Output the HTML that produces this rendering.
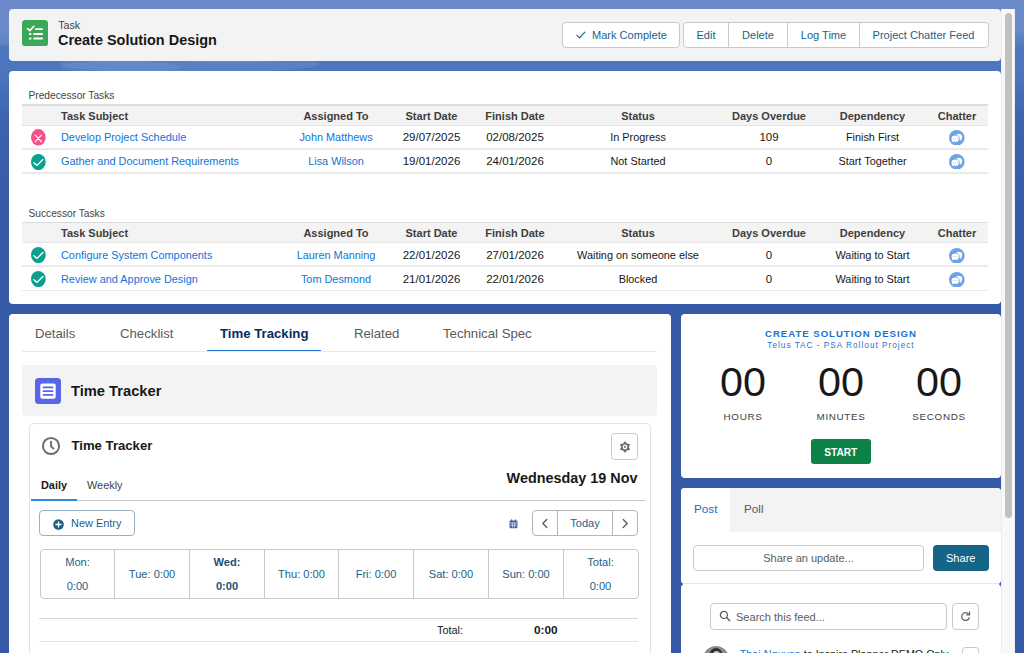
<!DOCTYPE html>
<html>
<head>
<meta charset="utf-8">
<title>Create Solution Design</title>
<style>
*{box-sizing:border-box;margin:0;padding:0}
html,body{width:1024px;height:653px;overflow:hidden}
body{font-family:"Liberation Sans",sans-serif;font-size:10.9px;color:#181818;position:relative;
 background:linear-gradient(180deg,#6b8aca 0px,#6a89c9 30px,#4e78be 48px,#4b75bc 75px,#3d62ae 125px,#385ba9 200px,#375aa8 653px)}
.abs{position:absolute}
.card{position:absolute;background:#fff;border-radius:4px}
.t{position:absolute;white-space:nowrap;line-height:16px;height:16px}
.c{text-align:center}
.b{font-weight:700}
.link{color:#0f74d8}
.btn{position:absolute;background:#fff;border:1px solid #c9c9c9;border-radius:4px;color:#1a6189;text-align:center;white-space:nowrap}
.hdr{position:absolute;left:22px;width:966px;height:22px;background:#f3f3f3;border-top:2px solid #dcdcdc;border-bottom:1px solid #e5e5e5}
.hl{position:absolute;left:22px;width:966px;height:1.500px;background:#eaeaea}
.th{font-weight:700;color:#3e3e3c}
.ic{position:absolute;width:15px;height:15px}
</style>
</head>
<body>

<!-- page wave highlight -->
<svg class="abs" style="left:0;top:0" width="1024" height="120" viewBox="0 0 1024 120">
 <path d="M0 0H1024V26C900 30 800 40 640 44C470 48 360 60 250 62C150 64 60 50 0 44Z" fill="#6b8aca" opacity=".6"/>
</svg>

<svg class="abs" style="left:0;top:40px" width="520" height="40" viewBox="0 0 520 40">
 <ellipse cx="190" cy="24" rx="130" ry="9" fill="#7f9fd6" opacity=".25"/>
 <ellipse cx="120" cy="27" rx="60" ry="6" fill="#8aa8dc" opacity=".2"/>
</svg>
<!-- scrollbar -->
<div class="abs" style="left:1001px;top:9px;width:14px;height:644px;background:#f8f8f8;border-left:1px solid #ececec;border-right:1px solid #ececec"></div>
<div class="abs" style="left:1005px;top:13px;width:7px;height:505px;background:#c1c1c1;border-radius:4px"></div>

<!-- HEADER -->
<div class="card" id="header" style="left:9px;top:9px;width:992px;height:52px;background:#f3f3f3"></div>
<!-- task icon -->
<svg class="abs" style="left:22px;top:20px" width="26.100" height="26.300" viewBox="0 0 26.1 26.3">
 <rect x="0" y="0" width="26.100" height="26.300" rx="3.600" fill="#3ba858"/>
 <path d="M5.600 8.700l2.200 2 4-4.300" fill="none" stroke="#fff" stroke-width="1.700" stroke-linecap="round" stroke-linejoin="round"/>
 <rect x="13.100" y="8.200" width="7.800" height="1.900" rx=".5" fill="#fff"/>
 <rect x="7" y="12.900" width="2.400" height="2.100" rx=".5" fill="#fff"/>
 <rect x="11.300" y="12.900" width="9.600" height="2.100" rx=".5" fill="#fff"/>
 <rect x="7" y="17.500" width="2.400" height="2.100" rx=".5" fill="#fff"/>
 <rect x="11.300" y="17.500" width="9.600" height="2.100" rx=".5" fill="#fff"/>
</svg>
<div class="t" style="left:58.200px;top:17px;font-size:10.7px;color:#444">Task</div>
<div class="t b" style="left:58px;top:30.600px;font-size:14.45px;line-height:18px;height:18px;color:#181818">Create Solution Design</div>

<div class="btn" style="left:562px;top:22px;width:118px;height:25.800px"></div>
<svg class="abs" style="left:575px;top:30px" width="12" height="10" viewBox="0 0 12 10"><path d="M2 5.400l2.600 2.500L9.800 2.200" fill="none" stroke="#1a6189" stroke-width="1.150" stroke-linecap="round" stroke-linejoin="round"/></svg>
<div class="t" style="left:592px;top:26.5px;font-size:11.06px;color:#1a6189">Mark Complete</div>

<div class="btn" style="left:683px;top:22px;width:306px;height:25.800px"></div>
<div class="abs" style="left:728px;top:22px;width:1px;height:25.800px;background:#c9c9c9"></div>
<div class="abs" style="left:787px;top:22px;width:1px;height:25.800px;background:#c9c9c9"></div>
<div class="abs" style="left:859px;top:22px;width:1px;height:25.800px;background:#c9c9c9"></div>
<div class="t c" style="left:683px;width:46px;top:26.5px;font-size:11.06px;color:#1a6189">Edit</div>
<div class="t c" style="left:728px;width:60px;top:26.5px;font-size:11.06px;color:#1a6189">Delete</div>
<div class="t c" style="left:787px;width:73px;top:26.5px;font-size:11.06px;color:#1a6189">Log Time</div>
<div class="t c" style="left:859px;width:129px;top:26.5px;font-size:11.06px;color:#1a6189">Project Chatter Feed</div>

<!-- CARD 1 : related tasks -->
<div class="card" id="card1" style="left:9px;top:71px;width:992px;height:232.700px"></div>
<svg width="0" height="0" style="position:absolute">
 <defs>
  <g id="i-x"><ellipse cx="7.350" cy="8.300" rx="7.350" ry="8.300" fill="#fb4f89"/><path d="M4.300 6.100l6.100 6.600M10.400 6.100l-6.100 6.600" stroke="#fff" stroke-width="1.200" stroke-linecap="round"/></g>
  <g id="i-ok"><ellipse cx="7.350" cy="8.100" rx="7.350" ry="8.100" fill="#0ca08e"/><path d="M2.900 8.700l3.100 2.700 5.900-5.800" fill="none" stroke="#fff" stroke-width="1.350" stroke-linecap="round" stroke-linejoin="round"/></g>
  <g id="i-ch"><circle cx="8" cy="8" r="8" fill="#6ea3e6"/>
   <ellipse cx="10.200" cy="7.150" rx="3.300" ry="3.200" fill="#fff"/><path d="M12 9.300l1.500 1.400-2.600-.3z" fill="#fff"/>
   <ellipse cx="6.400" cy="8.900" rx="4.650" ry="4.050" fill="#6ea3e6"/>
   <ellipse cx="6.400" cy="8.900" rx="3.800" ry="3.250" fill="#fff"/><path d="M3.400 10.400l-.6 2 2.400-.9z" fill="#fff"/>
   <circle cx="4.400" cy="8.900" r=".45" fill="#6ea3e6"/><circle cx="6.450" cy="8.900" r=".45" fill="#6ea3e6"/><circle cx="8.500" cy="8.900" r=".45" fill="#6ea3e6"/>
  </g>
 </defs>
</svg>

<!-- Predecessor -->
<div class="t" style="left:28.500px;top:87.500px;font-size:10.2px;color:#444">Predecessor Tasks</div>
<div class="hdr" style="top:104px"></div>
<div class="t th" style="left:61px;top:108px;font-size:11px">Task Subject</div>
<div class="t th c" style="left:286px;width:100px;top:108px;font-size:11px">Assigned To</div>
<div class="t th c" style="left:381.500px;width:100px;top:108px;font-size:11px">Start Date</div>
<div class="t th c" style="left:465px;width:100px;top:108px;font-size:11px">Finish Date</div>
<div class="t th c" style="left:588px;width:100px;top:108px;font-size:11px">Status</div>
<div class="t th c" style="left:719px;width:100px;top:108px;font-size:11px">Days Overdue</div>
<div class="t th c" style="left:822.500px;width:100px;top:108px;font-size:11px">Dependency</div>
<div class="t th c" style="left:907px;width:100px;top:108px;font-size:11px">Chatter</div>

<svg class="abs" style="left:31px;top:129.20px;width:14.700px;height:16.6px" viewBox="0 0 14.7 16.6"><use href="#i-x"/></svg>
<div class="t link" style="left:61px;top:129px">Develop Project Schedule</div>
<div class="t link c" style="left:236px;width:200px;top:129px">John Matthews</div>
<div class="t c" style="left:381.500px;width:100px;top:129px;font-size:11.5px">29/07/2025</div>
<div class="t c" style="left:465px;width:100px;top:129px;font-size:11.5px">02/08/2025</div>
<div class="t c" style="left:538px;width:200px;top:129px">In Progress</div>
<div class="t c" style="left:719px;width:100px;top:129px;font-size:11.5px">109</div>
<div class="t c" style="left:772.500px;width:200px;top:129px">Finish First</div>
<svg class="abs" style="left:949.200px;top:129.700px;width:15.600px;height:15.600px" viewBox="0 0 16 16"><use href="#i-ch"/></svg>
<div class="hl" style="top:148.300px"></div>

<svg class="abs" style="left:31px;top:153.80px;width:14.700px;height:16.2px" viewBox="0 0 14.7 16.2"><use href="#i-ok"/></svg>
<div class="t link" style="left:61px;top:153px">Gather and Document Requirements</div>
<div class="t link c" style="left:236px;width:200px;top:153px">Lisa Wilson</div>
<div class="t c" style="left:381.500px;width:100px;top:153px;font-size:11.5px">19/01/2026</div>
<div class="t c" style="left:465px;width:100px;top:153px;font-size:11.5px">24/01/2026</div>
<div class="t c" style="left:538px;width:200px;top:153px">Not Started</div>
<div class="t c" style="left:719px;width:100px;top:153px;font-size:11.5px">0</div>
<div class="t c" style="left:772.500px;width:200px;top:153px">Start Together</div>
<svg class="abs" style="left:949.200px;top:153.700px;width:15.600px;height:15.600px" viewBox="0 0 16 16"><use href="#i-ch"/></svg>
<div class="hl" style="top:172.200px"></div>

<!-- Successor -->
<div class="t" style="left:28.500px;top:205.500px;font-size:10.2px;color:#444">Successor Tasks</div>
<div class="hdr" style="top:222px;height:21px;border-top-width:1.500px"></div>
<div class="t th" style="left:61px;top:225.300px;font-size:11px">Task Subject</div>
<div class="t th c" style="left:286px;width:100px;top:225.300px;font-size:11px">Assigned To</div>
<div class="t th c" style="left:381.500px;width:100px;top:225.300px;font-size:11px">Start Date</div>
<div class="t th c" style="left:465px;width:100px;top:225.300px;font-size:11px">Finish Date</div>
<div class="t th c" style="left:588px;width:100px;top:225.300px;font-size:11px">Status</div>
<div class="t th c" style="left:719px;width:100px;top:225.300px;font-size:11px">Days Overdue</div>
<div class="t th c" style="left:822.500px;width:100px;top:225.300px;font-size:11px">Dependency</div>
<div class="t th c" style="left:907px;width:100px;top:225.300px;font-size:11px">Chatter</div>

<svg class="abs" style="left:31px;top:247.00px;width:14.700px;height:16.2px" viewBox="0 0 14.7 16.2"><use href="#i-ok"/></svg>
<div class="t link" style="left:61px;top:247px">Configure System Components</div>
<div class="t link c" style="left:236px;width:200px;top:247px">Lauren Manning</div>
<div class="t c" style="left:381.500px;width:100px;top:247px;font-size:11.5px">22/01/2026</div>
<div class="t c" style="left:465px;width:100px;top:247px;font-size:11.5px">27/01/2026</div>
<div class="t c" style="left:538px;width:200px;top:247px">Waiting on someone else</div>
<div class="t c" style="left:719px;width:100px;top:247px;font-size:11.5px">0</div>
<div class="t c" style="left:772.500px;width:200px;top:247px">Waiting to Start</div>
<svg class="abs" style="left:949.200px;top:247.5px;width:15.600px;height:15.600px" viewBox="0 0 16 16"><use href="#i-ch"/></svg>
<div class="hl" style="top:265.300px"></div>

<svg class="abs" style="left:31px;top:270.85px;width:14.700px;height:16.2px" viewBox="0 0 14.7 16.2"><use href="#i-ok"/></svg>
<div class="t link" style="left:61px;top:271px">Review and Approve Design</div>
<div class="t link c" style="left:236px;width:200px;top:271px">Tom Desmond</div>
<div class="t c" style="left:381.500px;width:100px;top:271px;font-size:11.5px">21/01/2026</div>
<div class="t c" style="left:465px;width:100px;top:271px;font-size:11.5px">22/01/2026</div>
<div class="t c" style="left:538px;width:200px;top:271px">Blocked</div>
<div class="t c" style="left:719px;width:100px;top:271px;font-size:11.5px">0</div>
<div class="t c" style="left:772.500px;width:200px;top:271px">Waiting to Start</div>
<svg class="abs" style="left:949.200px;top:271.5px;width:15.600px;height:15.600px" viewBox="0 0 16 16"><use href="#i-ch"/></svg>
<div class="hl" style="top:289.500px"></div>

<!-- CARD 2 : tabs -->
<div class="card" id="card2" style="left:9px;top:314.300px;width:661.500px;height:346px"></div>
<!-- tabs -->
<div class="abs" style="left:22px;top:351px;width:635px;height:1px;background:#e9e9e9"></div>
<div class="t" style="left:35px;top:325px;font-size:13.2px;line-height:18px;height:18px;color:#5a5a5a">Details</div>
<div class="t" style="left:120px;top:325px;font-size:13.2px;line-height:18px;height:18px;color:#5a5a5a">Checklist</div>
<div class="t b" style="left:220px;top:325px;font-size:13.2px;line-height:18px;height:18px;color:#032d60">Time Tracking</div>
<div class="t" style="left:354px;top:325px;font-size:13.2px;line-height:18px;height:18px;color:#5a5a5a">Related</div>
<div class="t" style="left:443px;top:325px;font-size:13.2px;line-height:18px;height:18px;color:#5a5a5a">Technical Spec</div>
<div class="abs" style="left:207px;top:349.700px;width:114px;height:1.800px;background:#2477d2"></div>

<!-- Time Tracker band -->
<div class="abs" style="left:22px;top:365px;width:635px;height:51px;background:#f3f3f3;border-radius:4px"></div>
<svg class="abs" style="left:35px;top:378px" width="26" height="26" viewBox="0 0 26 26">
 <rect width="26" height="26" rx="3.5" fill="#5867e8"/>
 <rect x="5.300" y="5.400" width="15.400" height="15.300" rx="2" fill="#fff"/>
 <rect x="7.700" y="8.400" width="10.600" height="1.800" rx=".5" fill="#5867e8"/>
 <rect x="7.700" y="12.200" width="10.600" height="1.800" rx=".5" fill="#5867e8"/>
 <rect x="7.700" y="16" width="10.600" height="1.800" rx=".5" fill="#5867e8"/>
</svg>
<div class="t b" style="left:71px;top:381.700px;font-size:14.7px;line-height:18px;height:18px">Time Tracker</div>

<!-- inner card -->
<div class="abs" style="left:29px;top:423px;width:622px;height:240px;border:1px solid #e2e2e2;border-radius:4px;background:#fff"></div>
<svg class="abs" style="left:41px;top:436px" width="20" height="20" viewBox="0 0 20 20">
 <circle cx="10" cy="10" r="8.100" fill="none" stroke="#6e6e6e" stroke-width="2"/>
 <path d="M10 5.600v4.600l2.500 2.400" fill="none" stroke="#6e6e6e" stroke-width="1.900" stroke-linecap="round" stroke-linejoin="round"/>
</svg>
<div class="t b" style="left:71.500px;top:437.300px;font-size:13.15px;line-height:18px;height:18px">Time Tracker</div>

<!-- gear button -->
<div class="btn" style="left:611px;top:433px;width:27px;height:26.600px;border-radius:3.500px"></div>
<svg class="abs" style="left:618.500px;top:440.700px" width="12" height="12" viewBox="0 0 12 12">
 <path d="M6.00 1.10L7.60 3.23L10.24 3.55L9.20 6.00L10.24 8.45L7.60 8.77L6.00 10.90L4.40 8.77L1.76 8.45L2.80 6.00L1.76 3.55L4.40 3.23Z" fill="#6a6a6a" stroke="#6a6a6a" stroke-width="1.300" stroke-linejoin="round"/>
 <circle cx="6" cy="6" r="2.450" fill="#fff"/>
 <circle cx="6" cy="6" r="1.150" fill="#8a8a8a"/>
</svg>

<div class="t b" style="right:386.500px;top:469px;font-size:14.4px;line-height:18px;height:18px">Wednesday 19 Nov</div>

<!-- daily/weekly -->
<div class="abs" style="left:31px;top:500px;width:615px;height:1px;background:#c9c9c9"></div>
<div class="abs" style="left:31px;top:499px;width:46px;height:2px;background:#2c8be0"></div>
<div class="t b" style="left:41px;top:477px">Daily</div>
<div class="t" style="left:87px;top:477px;color:#444">Weekly</div>

<!-- new entry -->
<div class="btn" style="left:39px;top:510px;width:95.700px;height:26px;border-color:#93b4c8"></div>
<svg class="abs" style="left:53.200px;top:518.800px" width="11" height="11" viewBox="0 0 11 11"><circle cx="5.500" cy="5.500" r="5.300" fill="#1a6189"/><path d="M5.500 2.900v5.200M2.900 5.500h5.200" stroke="#fff" stroke-width="1.300" stroke-linecap="round"/></svg>
<div class="t" style="left:71px;top:515.100px;font-size:10.95px;color:#1a6189">New Entry</div>

<!-- calendar icon -->
<svg class="abs" style="left:508.600px;top:519px" width="9" height="9.900" viewBox="0 0 10 11">
 <rect x=".6" y="1.600" width="8.800" height="8.600" rx="1" fill="#4a66a8"/>
 <rect x="2.200" y=".4" width="1.300" height="2.400" rx=".5" fill="#4a66a8"/><rect x="6.500" y=".4" width="1.300" height="2.400" rx=".5" fill="#4a66a8"/>
 <rect x="1.500" y="4.100" width="7" height=".8" fill="#fff"/>
 <rect x="1.500" y="6.600" width="7" height=".7" fill="#fff" opacity=".85"/>
 <rect x="3.600" y="4.900" width=".7" height="4.600" fill="#fff" opacity=".85"/><rect x="5.900" y="4.900" width=".7" height="4.600" fill="#fff" opacity=".85"/>
</svg>

<!-- prev/today/next -->
<div class="btn" style="left:532px;top:510px;width:106px;height:26px;border-color:#b5b5b5"></div>
<div class="abs" style="left:557px;top:510px;width:1px;height:26px;background:#b5b5b5"></div>
<div class="abs" style="left:612px;top:510px;width:1px;height:26px;background:#b5b5b5"></div>
<svg class="abs" style="left:540px;top:517.500px" width="10" height="11" viewBox="0 0 10 11"><path d="M6.800 1.500L2.800 5.500l4 4" fill="none" stroke="#5c5c5c" stroke-width="1.300" stroke-linecap="round" stroke-linejoin="round"/></svg>
<svg class="abs" style="left:620px;top:517.500px" width="10" height="11" viewBox="0 0 10 11"><path d="M3.200 1.500l4 4-4 4" fill="none" stroke="#5c5c5c" stroke-width="1.300" stroke-linecap="round" stroke-linejoin="round"/></svg>
<div class="t c" style="left:558px;width:54px;top:515px;font-size:11.06px;color:#1a6189">Today</div>

<!-- week table -->
<div class="abs" style="left:39.500px;top:549px;width:599.300px;height:49.500px;border:1px solid #c9c9c9;border-radius:4px"></div>
<div class="abs" style="left:114px;top:549px;width:1px;height:50px;background:#c9c9c9"></div>
<div class="abs" style="left:189px;top:549px;width:1px;height:50px;background:#c9c9c9"></div>
<div class="abs" style="left:264px;top:549px;width:1px;height:50px;background:#c9c9c9"></div>
<div class="abs" style="left:338px;top:549px;width:1px;height:50px;background:#c9c9c9"></div>
<div class="abs" style="left:413px;top:549px;width:1px;height:50px;background:#c9c9c9"></div>
<div class="abs" style="left:488px;top:549px;width:1px;height:50px;background:#c9c9c9"></div>
<div class="abs" style="left:563px;top:549px;width:1px;height:50px;background:#c9c9c9"></div>
<div class="t c" style="left:40px;width:75px;top:554px;color:#1a6189;font-size:11.1px">Mon:</div>
<div class="t c" style="left:40px;width:75px;top:578px;color:#1a6189;font-size:11.1px">0:00</div>
<div class="t c" style="left:114px;width:76px;top:566px;color:#1a6189;font-size:11.1px">Tue: 0:00</div>
<div class="t c b" style="left:189px;width:76px;top:554px;color:#1a4f78;font-size:11.1px">Wed:</div>
<div class="t c b" style="left:189px;width:76px;top:578px;color:#1a4f78;font-size:11.1px">0:00</div>
<div class="t c" style="left:264px;width:75px;top:566px;color:#1a6189;font-size:11.1px">Thu: 0:00</div>
<div class="t c" style="left:338px;width:76px;top:566px;color:#1a6189;font-size:11.1px">Fri: 0:00</div>
<div class="t c" style="left:413px;width:76px;top:566px;color:#1a6189;font-size:11.1px">Sat: 0:00</div>
<div class="t c" style="left:488px;width:76px;top:566px;color:#1a6189;font-size:11.1px">Sun: 0:00</div>
<div class="t c" style="left:563px;width:75px;top:554px;color:#1a6189;font-size:11.1px">Total:</div>
<div class="t c" style="left:563px;width:75px;top:578px;color:#1a6189;font-size:11.1px">0:00</div>

<!-- totals row -->
<div class="abs" style="left:39px;top:618px;width:599px;height:1px;background:#d8d8d8"></div>
<div class="abs" style="left:39px;top:641px;width:599px;height:1px;background:#e5e5e5"></div>
<div class="t" style="left:437px;top:621.900px">Total:</div>
<div class="t b" style="left:534px;top:621.900px;font-size:11.8px">0:00</div>

<!-- CARD 3 : timer -->
<div class="card" id="card3" style="left:680.700px;top:314.300px;width:320.300px;height:163.700px"></div>
<div class="t c b" style="left:681px;width:320px;top:325.600px;font-size:9.6px;letter-spacing:.98px;color:#1a73d1">CREATE SOLUTION DESIGN</div>
<div class="t c" style="left:681px;width:320px;top:337.500px;font-size:8.2px;letter-spacing:1.020px;color:#1a73d1">Telus TAC - PSA Rollout Project</div>
<div class="t c" style="left:693px;width:100px;top:358px;font-size:41.3px;line-height:48px;height:48px;color:#181818">00</div>
<div class="t c" style="left:791px;width:100px;top:358px;font-size:41.3px;line-height:48px;height:48px;color:#181818">00</div>
<div class="t c" style="left:889px;width:100px;top:358px;font-size:41.3px;line-height:48px;height:48px;color:#181818">00</div>
<div class="t c" style="left:693px;width:100px;top:409.200px;font-size:9.9px;letter-spacing:.65px;color:#3e3e3c">HOURS</div>
<div class="t c" style="left:791px;width:100px;top:409.200px;font-size:9.9px;letter-spacing:.65px;color:#3e3e3c">MINUTES</div>
<div class="t c" style="left:889px;width:100px;top:409.200px;font-size:9.9px;letter-spacing:.65px;color:#3e3e3c">SECONDS</div>
<div class="abs" style="left:811px;top:439.300px;width:59.500px;height:24.800px;background:#0d8246;border-radius:3px"></div>
<div class="t c b" style="left:811px;width:59.500px;top:444.800px;font-size:10.2px;color:#fff;font-weight:700">START</div>

<!-- CARD 4 : chatter -->
<div class="card" id="card4" style="left:680.700px;top:488px;width:320.300px;height:95.500px;overflow:hidden">
 <div class="abs" style="left:0;top:0;width:320px;height:43.700px;background:#f3f3f3"></div>
 <div class="abs" style="left:0;top:0;width:49px;height:43.700px;background:#fff"></div>
</div>
<div class="card" id="card4b" style="left:680.700px;top:583.500px;width:320.300px;height:80px;border-top:1px solid #e5e5e5"></div>
<!-- notch fill so only tiny corners show -->
<div class="abs" style="left:683px;top:580px;width:316px;height:7px;background:#fff"></div>
<div class="abs" style="left:683px;top:583px;width:316px;height:1px;background:#e5e5e5"></div>

<div class="t" style="left:694px;top:500.200px;font-size:11.7px;line-height:18px;height:18px;color:#1b6ec7">Post</div>
<div class="t" style="left:744px;top:500.200px;font-size:11.7px;line-height:18px;height:18px;color:#5a5a5a">Poll</div>

<div class="btn" style="left:693px;top:545px;width:231px;height:25.700px"></div>
<div class="t c" style="left:693px;width:231px;top:549.500px;font-size:11px;color:#5c5c5c">Share an update...</div>
<div class="abs" style="left:933px;top:545px;width:55.500px;height:25.700px;background:#166487;border-radius:4px"></div>
<div class="t c" style="left:933px;width:55.500px;top:549.500px;font-size:11.06px;color:#fff">Share</div>

<!-- search -->
<div class="btn" style="left:709.500px;top:603px;width:237px;height:26.500px"></div>
<svg class="abs" style="left:719px;top:610px" width="12" height="12" viewBox="0 0 12 12"><circle cx="4.900" cy="4.900" r="3.500" fill="none" stroke="#5c5c5c" stroke-width="1.300"/><path d="M7.600 7.600l3.100 3.100" stroke="#5c5c5c" stroke-width="1.400" stroke-linecap="round"/></svg>
<div class="t" style="left:736px;top:608.500px;font-size:11.04px;color:#5c5c5c">Search this feed...</div>
<div class="btn" style="left:952.300px;top:603px;width:26.700px;height:26.500px"></div>
<svg class="abs" style="left:960px;top:611px" width="11" height="11" viewBox="0 0 11 11"><path d="M8.600 3.100A3.900 3.900 0 1 0 9.300 6.700" fill="none" stroke="#5c5c5c" stroke-width="1.200" stroke-linecap="round"/><path d="M9.600.9v2.900H6.700" fill="none" stroke="#5c5c5c" stroke-width="1.200" stroke-linecap="round" stroke-linejoin="round"/></svg>

<!-- feed item (cut off) -->
<div class="abs" style="left:703.300px;top:645.600px;width:26px;height:26px;border-radius:13px;background:#8c8c8c;overflow:hidden">
 <div class="abs" style="left:7px;top:2.500px;width:12px;height:12px;border-radius:6px;background:#2e2e2e"></div>
 <div class="abs" style="left:9.500px;top:5.500px;width:7px;height:7px;border-radius:3.500px;background:#d8d0c8"></div>
</div>
<div class="t" style="left:739.800px;top:646.300px;font-size:10.75px"><span style="color:#0f74d8">Thai Nguyen</span> to Inspire Planner DEMO Only</div>
<div class="btn" style="left:962px;top:647px;width:17px;height:17px;border-radius:3px"></div>

</body>
</html>
